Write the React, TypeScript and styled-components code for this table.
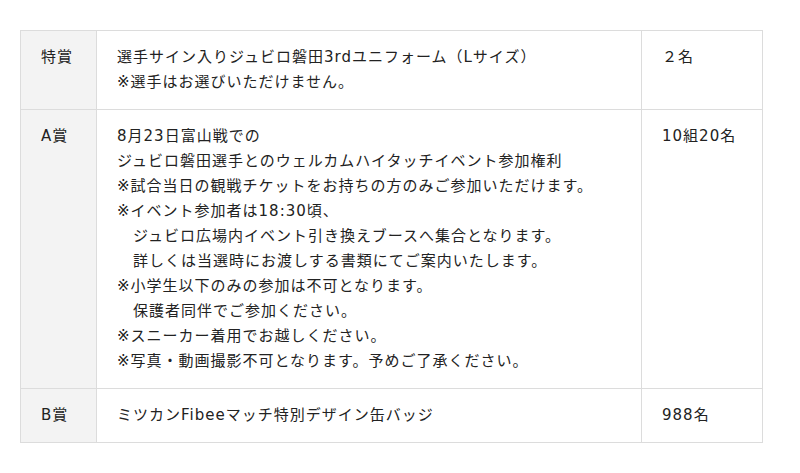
import styled, { createGlobalStyle } from "styled-components";

const GlobalStyle = createGlobalStyle`
  html, body {
    margin: 0;
    padding: 0;
    background: #fff;
  }
  body {
    font-family: "DejaVu Sans", "Noto Sans CJK JP", sans-serif;
    color: #222;
  }
`;

const Wrapper = styled.div`
  padding: 30px 0 0 20px;
`;

const PrizeTable = styled.table`
  width: 742px;
  border-collapse: collapse;
  table-layout: fixed;
  font-size: 15px;
  line-height: 25px;
  letter-spacing: 1px;
`;

const Col = styled.col<{ $w: number }>`
  width: ${(p) => p.$w}px;
`;

const Cell = styled.td<{ $head?: boolean }>`
  border: 1px solid #dcdcdc;
  padding: 14px 20px;
  vertical-align: top;
  white-space: pre;
  background: ${(p) => (p.$head ? "#f3f3f3" : "#fff")};

  & + & {
    border-left-color: #b8b8b8;
  }
`;

type Prize = {
  rank: string;
  lines: string[];
  count: string;
};

const prizes: Prize[] = [
  {
    rank: "特賞",
    lines: [
      "選手サイン入りジュビロ磐田3rdユニフォーム（Lサイズ）",
      "※選手はお選びいただけません。",
    ],
    count: "２名",
  },
  {
    rank: "A賞",
    lines: [
      "8月23日富山戦での",
      "ジュビロ磐田選手とのウェルカムハイタッチイベント参加権利",
      "※試合当日の観戦チケットをお持ちの方のみご参加いただけます。",
      "※イベント参加者は18:30頃、",
      "　ジュビロ広場内イベント引き換えブースへ集合となります。",
      "　詳しくは当選時にお渡しする書類にてご案内いたします。",
      "※小学生以下のみの参加は不可となります。",
      "　保護者同伴でご参加ください。",
      "※スニーカー着用でお越しください。",
      "※写真・動画撮影不可となります。予めご了承ください。",
    ],
    count: "10組20名",
  },
  {
    rank: "B賞",
    lines: ["ミツカンFibeeマッチ特別デザイン缶バッジ"],
    count: "988名",
  },
];

const App = () => {
  return (
    <Wrapper>
      <GlobalStyle />
      <PrizeTable>
        <colgroup>
          <Col $w={76} />
          <Col $w={545} />
          <Col $w={121} />
        </colgroup>
        <tbody>
          {prizes.map((p) => (
            <tr key={p.rank}>
              <Cell $head>{p.rank}</Cell>
              <Cell>{p.lines.join("\n")}</Cell>
              <Cell>{p.count}</Cell>
            </tr>
          ))}
        </tbody>
      </PrizeTable>
    </Wrapper>
  );
};

export default App;
